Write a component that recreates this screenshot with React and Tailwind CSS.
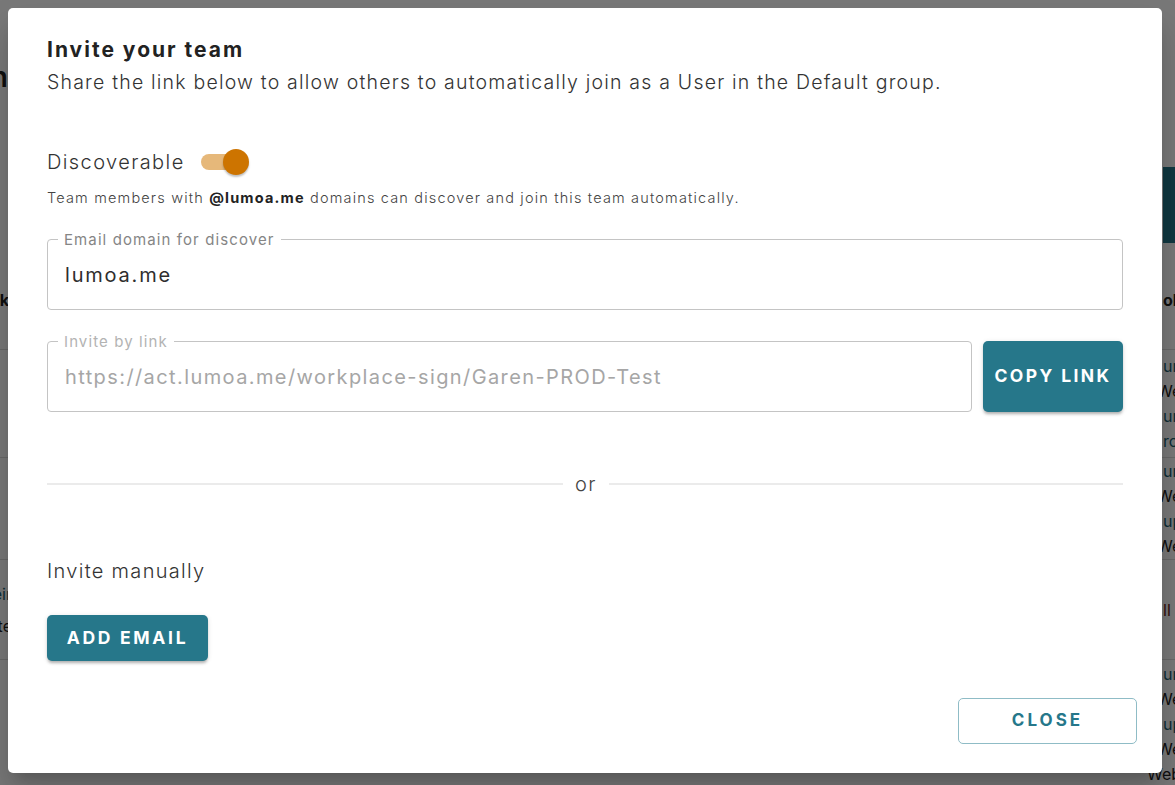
import React from "react";

const TEAL = "#26778a";

function Background() {
  return (
    <div className="flex flex-col w-full text-[#222]">
      <div className="h-[62px]" />
      <div className="flex h-[30px] items-center">
        <div className="w-[8px] flex justify-end">
          <span className="whitespace-nowrap text-[28px] font-semibold">Team admin</span>
        </div>
      </div>
      <div className="h-[75px]" />
      <div className="flex">
        <div className="flex-1" />
        <div className="w-[12px] h-[76px] bg-[#26778a]" />
      </div>
      <div className="flex h-[107px] items-center border-b border-[#ddd] pt-[8px]">
        <div className="w-[8px] flex justify-end">
          <span className="whitespace-nowrap font-bold text-[16px] -mr-[1px]">Link</span>
        </div>
        <div className="flex-1" />
        <div className="w-[12px] whitespace-nowrap font-bold text-[16px] -ml-[2px]">ol</div>
      </div>
      <div className="flex h-[108px] items-center border-b border-[#ddd]">
        <div className="flex-1" />
        <div className="w-[12px] whitespace-nowrap text-[16px] leading-[25px]">
          <div className="text-[#1d5f70]">urls</div>
          <div className="-ml-[6px]">Web</div>
          <div className="text-[#1d5f70]">urls</div>
          <div className="text-[#1d5f70]">roles</div>
        </div>
      </div>
      <div className="flex h-[102px] items-center border-b border-[#ddd]">
        <div className="flex-1" />
        <div className="w-[12px] whitespace-nowrap text-[16px] leading-[25px]">
          <div className="text-[#1d5f70]">urls</div>
          <div className="-ml-[6px]">Web</div>
          <div className="text-[#1d5f70]">upload</div>
          <div className="-ml-[6px]">Web</div>
        </div>
      </div>
      <div className="flex h-[100px] items-center border-b border-[#ddd]">
        <div className="w-[8px] flex justify-end">
          <div className="whitespace-nowrap text-[16px] leading-[32px] text-right -mr-[4px]">
            <div className="text-[#1d5f70]">Their</div>
            <div>Site</div>
          </div>
        </div>
        <div className="flex-1" />
        <div className="w-[12px] whitespace-nowrap text-[16px] text-[#6b1a1a]">ll</div>
      </div>
      <div className="flex pt-[2px]">
        <div className="flex-1" />
        <div className="w-[12px] whitespace-nowrap text-[16px] leading-[25px]">
          <div className="text-[#1d5f70]">urls</div>
          <div className="-ml-[6px]">Web</div>
          <div className="text-[#1d5f70]">upload</div>
          <div className="-ml-[6px]">Web</div>
          <div className="-ml-[16px]">Web</div>
        </div>
      </div>
    </div>
  );
}

function Outlined({ label, value, disabled, className = "" }) {
  return (
    <fieldset
      className={
        "border border-[#c4c4c4] rounded-[4px] pl-[10px] pr-[12px] h-[79px] " + className
      }
    >
      <legend
        className={
          "px-[6px] text-[15px] leading-[17px] tracking-[1.1px] " +
          (disabled ? "text-[#b3b3b3]" : "text-[#858585]")
        }
      >
        {label}
      </legend>
      <div
        className={
          "pl-[7px] pt-[15px] text-[20px] leading-[24px] whitespace-nowrap " +
          (disabled ? "text-[#a6a6a6] tracking-[1.4px]" : "text-[#2e2e2e] tracking-[1.8px]")
        }
      >
        {value}
      </div>
    </fieldset>
  );
}

export default function App() {
  return (
    <div
      className="relative h-[785px] w-[1175px] overflow-hidden bg-white"
      style={{ fontFamily: "Inter, 'Noto Sans', sans-serif" }}
    >
      <Background />
      <div className="absolute inset-0 bg-black/[0.53] pl-[8px] pt-[8px]">
        <div className="flex h-[765px] w-[1154px] flex-col rounded-[5px] bg-white shadow-[0_11px_15px_-7px_rgba(0,0,0,0.2),0_24px_38px_3px_rgba(0,0,0,0.14)]">
          <div className="px-[39px] pt-[29px] flex flex-col">
            <h2 className="text-[21px] leading-[26px] font-bold text-[#222] tracking-[2px]">Invite your team</h2>
            <p className="mt-[6px] text-[19.5px] leading-[26px] text-[#333] font-light tracking-[1.2px] whitespace-nowrap">
              Share the link below to allow others to automatically join as a User in the Default group.
            </p>

            <div className="mt-[52px] flex items-center h-[30px]">
              <span className="text-[20px] text-[#333] font-light tracking-[1.4px]">Discoverable</span>
              <div className="relative ml-[16px] h-[30px] w-[48px] flex items-center">
                <div className="h-[16px] w-[40px] rounded-full bg-[#e6b87a]" />
                <div className="absolute right-[0px] top-[2px] h-[26px] w-[26px] rounded-full bg-[#cd7400] shadow-[0_2px_2px_rgba(0,0,0,0.25)]" />
              </div>
            </div>
            <p className="mt-[12px] text-[14.5px] leading-[18px] text-[#444] font-light tracking-[1.17px] whitespace-nowrap">
              Team members with <span className="font-bold text-[#222]">@lumoa.me</span> domains can discover and join this team automatically.
            </p>

            <Outlined
              className="mt-[24px]"
              label="Email domain for discover"
              value="lumoa.me"
            />

            <div className="mt-[23px] flex items-end gap-[11px]">
              <Outlined
                className="flex-1"
                label="Invite by link"
                value="https://act.lumoa.me/workplace-sign/Garen-PROD-Test"
                disabled
              />
              <button
                className="h-[71px] w-[140px] rounded-[5px] text-white font-bold text-[17.5px] tracking-[2.4px] shadow-[0_3px_3px_-1px_rgba(0,0,0,0.25),0_1px_5px_rgba(0,0,0,0.12)]"
                style={{ backgroundColor: TEAL }}
              >
                COPY LINK
              </button>
            </div>

            <div className="mt-[60px] flex items-center gap-[12px]">
              <div className="h-[2px] flex-1 bg-[#ebebeb]" />
              <span className="text-[20px] leading-[24px] text-[#444] font-light tracking-[1.5px]">or</span>
              <div className="h-[2px] w-[514px] bg-[#ebebeb]" />
            </div>

            <p className="mt-[62px] text-[20px] leading-[26px] text-[#333] font-light tracking-[1.3px]">Invite manually</p>

            <div className="mt-[31px]">
              <button
                className="h-[46px] w-[161px] rounded-[5px] text-white font-bold text-[17.5px] tracking-[2.7px] shadow-[0_3px_3px_-1px_rgba(0,0,0,0.25),0_1px_5px_rgba(0,0,0,0.12)]"
                style={{ backgroundColor: TEAL }}
              >
                ADD EMAIL
              </button>
            </div>
          </div>
          <div className="flex justify-end pr-[25px] mt-[37px]">
            <button className="h-[46px] w-[179px] rounded-[5px] border border-[#8fbcc6] bg-white text-[#26778a] font-bold text-[17px] tracking-[3px]">
              CLOSE
            </button>
          </div>
        </div>
      </div>
    </div>
  );
}
